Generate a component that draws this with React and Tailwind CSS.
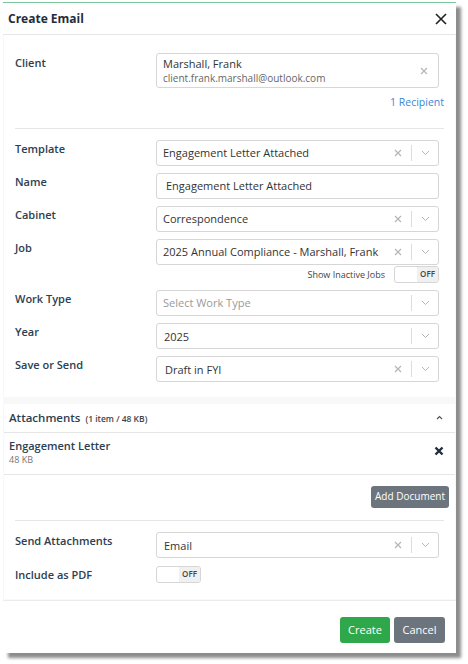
import React from "react";

const ClearIcon = ({ className = "" }) => (
  <svg width="8" height="8" viewBox="0 0 8 8" className={className}>
    <path d="M1 1L7 7M7 1L1 7" stroke="#b5b5b5" strokeWidth="1.2" />
  </svg>
);

const ChevronDown = () => (
  <svg width="9" height="6" viewBox="0 0 9 6">
    <path d="M1 1L4.5 4.5L8 1" stroke="#b5b5b5" strokeWidth="1" fill="none" />
  </svg>
);

const Select = ({ value, placeholder, clear = true, textClass = "" }) => (
  <div className="flex h-[26px] flex-1 items-center rounded-[3px] border border-[#d6d6d6] bg-white">
    <span
      className={`flex-1 truncate pl-[6px] text-[11px] ${textClass} ${
        value ? "text-[#333]" : "text-[#9a9a9a]"
      }`}
    >
      {value || placeholder}
    </span>
    {clear && <ClearIcon className="mr-[9px]" />}
    <span className="h-[16px] w-px bg-[#dcdcdc]" />
    <span className="flex w-[26px] justify-center">
      <ChevronDown />
    </span>
  </div>
);

const Toggle = () => (
  <div className="flex h-[17px] w-[45px] overflow-hidden rounded-[3px] border border-[#d6d6d6] bg-white">
    <div className="flex-1" />
    <div className="flex w-[21px] items-center justify-center bg-[#f0f0f0] text-[8px] font-semibold text-[#444]">
      OFF
    </div>
  </div>
);

const Row = ({ label, children, labelPad = "pt-[1px]" }) => (
  <div className="flex">
    <div className={`w-[141px] text-[11px] font-semibold text-[#2c3e50] ${labelPad}`}>{label}</div>
    <div className="flex flex-1 pr-[5px]">{children}</div>
  </div>
);

export default function App() {
  return (
    <div
      className="min-h-screen bg-white pl-[3px] pt-[2px]"
      style={{ fontFamily: '"Open Sans", "Noto Sans", sans-serif' }}
    >
      <div className="flex h-[651px] w-[453px] flex-col border-t border-[#7cc49a] bg-white shadow-[5px_5px_3px_rgba(0,0,0,0.45)]">
        {/* header */}
        <div className="flex h-[32px] items-center justify-between border-b border-[#e6e6e6] pl-[5px] pr-[9px]">
          <span className="text-[12px] font-bold text-[#1f2d3d]">Create Email</span>
          <svg width="12" height="12" viewBox="0 0 12 12">
            <path d="M1 1L11 11M11 1L1 11" stroke="#222" strokeWidth="1.6" />
          </svg>
        </div>

        <div className="flex flex-1 flex-col bg-[#f8f8f8]">
          {/* main card */}
          <div className="mx-px bg-white px-[11px] pb-[15px] pt-[18px]">
            <Row label="Client" labelPad="pt-[2px]">
              <div className="flex h-[35px] flex-1 items-center rounded-[3px] border border-[#d6d6d6] pl-[6px] pr-[10px]">
                <div className="flex-1">
                  <div className="text-[11px] leading-[14px] text-[#333]">Marshall, Frank</div>
                  <div className="text-[10px] leading-[14px] text-[#666]">client.frank.marshall@outlook.com</div>
                </div>
                <ClearIcon />
              </div>
            </Row>
            <div className="mt-[7px] text-right text-[10.5px] text-[#3b87d6]">1 Recipient</div>
            <div className="mb-[11px] mt-[17px] h-px bg-[#e6e6e6]" />

            <div className="flex flex-col gap-[7px]">
              <Row label="Template">
                <Select value="Engagement Letter Attached" />
              </Row>
              <Row label="Name">
                <div className="flex h-[26px] flex-1 items-center rounded-[3px] border border-[#d6d6d6] pl-[9px] text-[11px] text-[#333]">
                  Engagement Letter Attached
                </div>
              </Row>
              <Row label="Cabinet">
                <Select value="Correspondence" />
              </Row>
              <div>
                <Row label="Job">
                  <Select value="2025 Annual Compliance - Marshall, Frank" />
                </Row>
                <div className="mt-[1px] flex items-center justify-end gap-[9px] pr-[5px]">
                  <span className="text-[9px] text-[#444]">Show Inactive Jobs</span>
                  <Toggle />
                </div>
              </div>
              <Row label="Work Type">
                <Select placeholder="Select Work Type" clear={false} />
              </Row>
              <Row label="Year">
                <Select value="2025" clear={false} textClass="pt-[3px] pl-[7px]" />
              </Row>
              <Row label="Save or Send">
                <Select value="Draft in FYI" textClass="pt-[3px] pl-[8px]" />
              </Row>
            </div>
          </div>

          {/* attachments card */}
          <div className="mx-px mt-[7px] bg-white">
            <div className="flex h-[29px] items-center justify-between border-b border-[#e6e6e6] pl-[5px] pr-[12px]">
              <span className="text-[11.5px] font-semibold text-[#2c3e50]">
                Attachments <span className="ml-[2px] text-[8.5px] font-semibold text-[#444]">(1 item / 48 KB)</span>
              </span>
              <svg width="7" height="5" viewBox="0 0 7 5">
                <path d="M1 4L3.5 1.5L6 4" stroke="#555" strokeWidth="1.2" fill="none" />
              </svg>
            </div>
            <div className="flex h-[42px] items-center justify-between border-b border-[#e6e6e6] pl-[5px] pr-[11px]">
              <div className="leading-[14px]">
                <div className="text-[11px] font-semibold text-[#2c3e50]">Engagement Letter</div>
                <div className="text-[9px] text-[#777]">48 KB</div>
              </div>
              <svg width="10" height="10" viewBox="0 0 10 10" className="-mt-[4px]">
                <path d="M1.5 1.5L8.5 8.5M8.5 1.5L1.5 8.5" stroke="#1f2d3d" strokeWidth="2.4" />
              </svg>
            </div>
            <div className="px-[11px] pb-[16px] pt-[11px]">
              <div className="flex justify-end">
                <button className="-mr-[5px] h-[22px] w-[78px] rounded-[3px] bg-[#6c757d] text-[10px] font-medium text-white">
                  Add Document
                </button>
              </div>
              <div className="mb-[11px] mt-[12px] h-px bg-[#e6e6e6]" />
              <div className="flex flex-col gap-[8px]">
                <Row label="Send Attachments">
                  <Select value="Email" textClass="pt-[3px] pl-[7px]" />
                </Row>
                <Row label="Include as PDF">
                  <Toggle />
                </Row>
              </div>
            </div>
          </div>

          {/* footer */}
          <div className="mt-auto flex h-[53px] items-end justify-end gap-[4px] border-t border-[#ececec] bg-white pb-[10px] pr-[11px]">
            <button className="h-[26px] w-[50px] rounded-[3px] bg-[#2ea84a] text-[11px] text-white">Create</button>
            <button className="h-[26px] w-[51px] rounded-[3px] bg-[#6c757d] text-[11px] text-white">Cancel</button>
          </div>
        </div>
      </div>
    </div>
  );
}
